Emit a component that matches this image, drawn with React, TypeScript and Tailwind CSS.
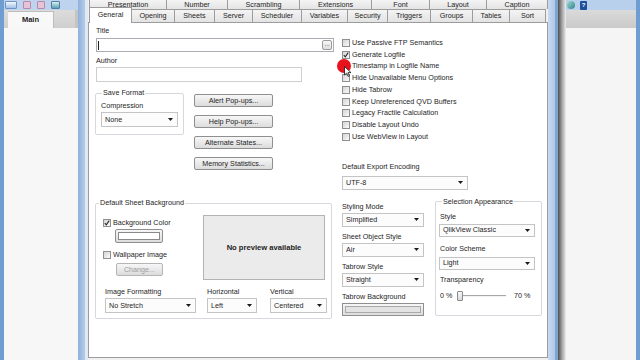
import React from 'react'

type Tab = { label: string; w: string }

const backTabs: Tab[] = [
  { label: 'Presentation', w: 'w-[78px]' },
  { label: 'Number', w: 'w-[61px]' },
  { label: 'Scrambling', w: 'w-[72px]' },
  { label: 'Extensions', w: 'w-[72px]' },
  { label: 'Font', w: 'w-[58px]' },
  { label: 'Layout', w: 'w-[57px]' },
  { label: 'Caption', w: 'w-[61px]' },
]

const frontTabs: Tab[] = [
  { label: 'Opening', w: 'w-[43px]' },
  { label: 'Sheets', w: 'w-[40px]' },
  { label: 'Server', w: 'w-[38px]' },
  { label: 'Scheduler', w: 'w-[49px]' },
  { label: 'Variables', w: 'w-[46px]' },
  { label: 'Security', w: 'w-[40px]' },
  { label: 'Triggers', w: 'w-[43px]' },
  { label: 'Groups', w: 'w-[42px]' },
  { label: 'Tables', w: 'w-[37px]' },
  { label: 'Sort', w: 'w-[36px]' },
]

const options = [
  { label: 'Use Passive FTP Semantics', checked: false },
  { label: 'Generate Logfile', checked: true },
  { label: 'Timestamp in Logfile Name', checked: false },
  { label: 'Hide Unavailable Menu Options', checked: false },
  { label: 'Hide Tabrow', checked: false },
  { label: 'Keep Unreferenced QVD Buffers', checked: false },
  { label: 'Legacy Fractile Calculation', checked: false },
  { label: 'Disable Layout Undo', checked: false },
  { label: 'Use WebView in Layout', checked: false },
]

const Arrow = () => (
  <svg width="5" height="3" viewBox="0 0 5 3" className="shrink-0">
    <path d="M0 0H5L2.5 3Z" fill="#1a1a1a" />
  </svg>
)

const Select = ({ value, className }: { value: string; className: string }) => (
  <div
    className={`flex items-center justify-between pl-[3px] pr-[4px] border border-[#c4c4c4] bg-[#fcfcfc] ${className}`}
  >
    <span>{value}</span>
    <Arrow />
  </div>
)

const Box = ({ checked = false }: { checked?: boolean }) => (
  <span className="w-[8px] h-[8px] shrink-0 border border-[#8f8f8f] bg-gradient-to-br from-[#d4d4d4] to-[#fafafa] flex items-center justify-center">
    {checked && (
      <svg width="6" height="6" viewBox="0 0 6 6">
        <path d="M0.8 3.2L2.3 4.8L5.2 0.6" fill="none" stroke="#2b2b2b" strokeWidth="1.1" />
      </svg>
    )}
  </span>
)

const Btn = ({ children, className = '' }: { children?: React.ReactNode; className?: string }) => (
  <div
    className={`flex items-center justify-center border border-[#8f8f8f] rounded-[2px] bg-gradient-to-b from-[#f7f7f7] to-[#dcdcdc] ${className}`}
  >
    {children}
  </div>
)

const LeftApp = () => (
  <div className="w-[78px] h-full flex flex-col border-l-[4px] border-[#6f9dd2] shrink-0">
    <div className="h-[10px] bg-[#bdd3ee] flex items-center gap-[6px] pl-[1px]">
      <span className="w-[12px] h-[8px] rounded-[1px] bg-gradient-to-b from-[#f4f8fc] to-[#9fc0e6] border border-[#6f95c4]" />
      <span className="w-[8px] h-[8px] rounded-[1px] bg-[#e6c3d6] border border-[#b98aa8]" />
      <span className="w-[8px] h-[8px] rounded-[1px] bg-[#e6c3d6] border border-[#b98aa8]" />
      <span className="w-[9px] h-[8px] rounded-[1px] bg-gradient-to-b from-[#d9f0f0] to-[#5c9fb5] border border-[#4e7ea0]" />
    </div>
    <div className="h-[18px] bg-gradient-to-b from-[#dcdcdc] to-[#cfcfcf] flex items-end pl-[4px] border-r-[3px] border-[#c4c4c4]">
      <div className="w-[46px] h-[17px] bg-[#f8f8f8] border-r border-t border-[#bdbdbd] flex items-center justify-center font-bold text-[7.5px]">
        Main
      </div>
    </div>
    <div className="flex-1 bg-[#f7f7f7]" />
  </div>
)

const RightApp = () => (
  <div className="flex-1 h-full flex">
    <div className="w-[8px] h-full bg-gradient-to-r from-[#4e4e4e] via-[#a3a3a3] to-[#eeeeee]" />
    <div className="flex-1 h-full flex flex-col border-r-[4px] border-[#6f9dd2]">
      <div className="h-[10px] bg-[#b9d0ed] flex items-center gap-[5px] pl-[1px]">
        <span className="w-[8px] h-[8px] rounded-full bg-gradient-to-br from-[#9fe0c8] to-[#2f7f8f]" />
        <span className="w-[7px] h-[9px] rounded-[1px] bg-[#1f4f9a] flex items-center justify-center text-[6px] leading-[6px] text-white font-bold">
          ?
        </span>
      </div>
      <div className="h-[18px] bg-gradient-to-b from-[#dadada] to-[#cacaca]" />
      <div className="flex-1 bg-[#f5f5f5]" />
    </div>
  </div>
)

const Dialog = () => (
  <div className="w-[480px] h-full flex shrink-0">
    <div className="w-[10px] h-full flex">
      <div className="w-[7px] bg-gradient-to-r from-[#8fb1db] to-[#b4cbe7]" />
      <div className="flex-1 bg-[#dfe8f3]" />
    </div>
    <div className="flex-1 h-full flex flex-col bg-[#f0f0f0]">
      <div className="h-[9px] flex pl-[1px]">
        {backTabs.map((t, i) => (
          <div
            key={t.label}
            className={`${t.w} h-full border-r border-[#9c9c9c] bg-gradient-to-b from-[#f4f4f4] to-[#e4e4e4] flex items-center justify-center ${i === 0 ? 'border-l' : ''}`}
          >
            {t.label}
          </div>
        ))}
      </div>
      <div className="h-[13px] flex items-end pl-[1px] relative z-10">
        <div className="w-[43px] h-[16px] mb-[-1px] bg-white border border-b-0 border-[#9c9c9c] flex items-start justify-center pt-[2px]">
          General
        </div>
        {frontTabs.map(t => (
          <div
            key={t.label}
            className={`${t.w} h-full border-t border-r border-[#9c9c9c] bg-gradient-to-b from-[#f4f4f4] to-[#e3e3e3] flex items-center justify-center`}
          >
            {t.label}
          </div>
        ))}
      </div>
      <div className="flex-1 mb-[2px] bg-white border border-[#9c9c9c] flex">
        {/* left column */}
        <div className="w-[253px] shrink-0 flex flex-col pl-[6px]">
          <div className="ml-[1px] mt-[3px] h-[10px]">Title</div>
          <div className="ml-[1px] mt-[2px] h-[14px] w-[238px] border border-[#abadb3] flex items-center justify-between pl-[1px] pr-[1px]">
            <span className="w-px h-[9px] bg-[#222]" />
            <span className="w-[10px] h-[10px] border border-[#9a9a9a] rounded-[2px] bg-gradient-to-b from-[#f7f7f7] to-[#dddddd] flex items-center justify-center text-[6px] leading-[6px] pb-[2px]">
              ...
            </span>
          </div>
          <div className="ml-[1px] mt-[4px] h-[10px]">Author</div>
          <div className="ml-[1px] mt-[1px] h-[15px] w-[206px] border border-[#cfcfcf]" />

          <div className="flex mt-[6px]">
            <fieldset className="w-[89px] h-[47px] border border-[#d5d9de] rounded-[2px] pl-[5px]">
              <legend className="ml-[1px] px-[1px] h-[10px] leading-[10px]">Save Format</legend>
              <div className="mt-[3px] h-[10px]">Compression</div>
              <Select value="None" className="mt-[1px] h-[15px] w-[77px]" />
            </fieldset>
            <div className="ml-[10px] mt-[6px] flex flex-col gap-[8px]">
              <Btn className="w-[79px] h-[13px]">Alert Pop-ups...</Btn>
              <Btn className="w-[79px] h-[13px]">Help Pop-ups...</Btn>
              <Btn className="w-[79px] h-[13px]">Alternate States...</Btn>
              <Btn className="w-[79px] h-[13px]">Memory Statistics...</Btn>
            </div>
          </div>

          <fieldset className="mt-[28px] w-[237px] h-[121px] border border-[#d5d9de] rounded-[2px]">
            <legend className="ml-[3px] px-[1px] h-[10px] leading-[10px]">Default Sheet Background</legend>
            <div className="flex items-start mt-[7px] pl-[7px]">
              <div className="flex flex-col pt-[3px]">
                <div className="h-[10px] flex items-center gap-[2px]">
                  <Box checked />
                  <span>Background Color</span>
                </div>
                <Btn className="ml-[12px] mt-[1px] w-[48px] h-[14px] p-[2px]">
                  <span className="w-full h-full bg-white border border-[#8a8a8a]" />
                </Btn>
                <div className="mt-[7px] h-[10px] flex items-center gap-[2px]">
                  <Box />
                  <span>Wallpaper Image</span>
                </div>
                <Btn className="ml-[13px] mt-[3px] w-[47px] h-[13px] border-[#b5b5b5] text-[#9c9c9c]">Change...</Btn>
              </div>
              <div className="ml-auto mr-[6px] w-[122px] h-[65px] bg-[#ebebeb] border border-[#b3b3b3] flex items-center justify-center font-bold text-[7.6px]">
                No preview available
              </div>
            </div>
            <div className="flex mt-[7px] pl-[9px]">
              <div className="flex flex-col">
                <div className="h-[10px]">Image Formatting</div>
                <Select value="No Stretch" className="mt-[1px] h-[15px] w-[91px]" />
              </div>
              <div className="flex flex-col ml-[11px]">
                <div className="h-[10px]">Horizontal</div>
                <Select value="Left" className="mt-[1px] h-[15px] w-[50px]" />
              </div>
              <div className="flex flex-col ml-[13px]">
                <div className="h-[10px]">Vertical</div>
                <Select value="Centered" className="mt-[1px] h-[15px] w-[57px]" />
              </div>
            </div>
          </fieldset>
        </div>

        {/* right column */}
        <div className="flex-1 flex flex-col">
          <div className="mt-[14px] flex flex-col">
            {options.map(o => (
              <div key={o.label} className="h-[11.75px] flex items-center gap-[2px]">
                <Box checked={o.checked} />
                <span>{o.label}</span>
              </div>
            ))}
          </div>
          <div className="mt-[19px] h-[10px]">Default Export Encoding</div>
          <Select value="UTF-8" className="mt-[4px] h-[14px] w-[126px]" />

          <div className="flex mt-[7px]">
            <div className="w-[82px] pt-[5px] flex flex-col">
              <div className="h-[10px]">Styling Mode</div>
              <Select value="Simplified" className="mt-[1px] h-[14px] w-[82px]" />
              <div className="mt-[5px] h-[10px]">Sheet Object Style</div>
              <Select value="Air" className="mt-[1px] h-[14px] w-[82px]" />
              <div className="mt-[5px] h-[10px]">Tabrow Style</div>
              <Select value="Straight" className="mt-[1px] h-[14px] w-[82px]" />
              <div className="mt-[5px] h-[10px]">Tabrow Background</div>
              <Btn className="mt-[1px] w-[82px] h-[13px] p-[2px] rounded-none">
                <span className="w-full h-full bg-[#e3e3e3] border border-[#a9a9a9]" />
              </Btn>
            </div>
            <fieldset className="ml-[11px] w-[107px] h-[119px] border border-[#d5d9de] rounded-[2px] pl-[3px]">
              <legend className="ml-[3px] px-[1px] h-[10px] leading-[10px]">Selection Appearance</legend>
              <div className="ml-[1px] mt-[5px] h-[10px]">Style</div>
              <Select value="QlikView Classic" className="mt-[2px] h-[13px] w-[96px]" />
              <div className="ml-[1px] mt-[7px] h-[10px]">Color Scheme</div>
              <Select value="Light" className="mt-[3px] h-[13px] w-[96px]" />
              <div className="ml-[1px] mt-[5px] h-[10px]">Transparency</div>
              <div className="mt-[4px] h-[14px] flex items-center">
                <span className="ml-[1px] w-[17px]">0 %</span>
                <div className="relative w-[49px] h-[10px] flex items-center">
                  <span className="w-full h-[2px] border-t border-b border-t-[#a8a8a8] border-b-[#f2f2f2]" />
                  <span className="absolute left-0 top-0 w-[6px] h-[10px] rounded-[1px] border border-[#8a8a8a] bg-gradient-to-b from-[#f8f8f8] to-[#d8d8d8]" />
                </div>
                <span className="ml-[8px]">70 %</span>
              </div>
            </fieldset>
          </div>
        </div>
      </div>
    </div>
    <div className="w-[10px] h-full flex">
      <div className="w-[7px] bg-gradient-to-r from-[#c9dbf0] to-[#adc7e6]" />
      <div className="flex-1 bg-[#7ea4d2]" />
    </div>
  </div>
)

export default function App() {
  return (
    <div className="relative w-[640px] h-[360px] overflow-hidden flex bg-[#f5f5f5] text-[#1e1e1e] [font-family:'Liberation_Sans',Arial,sans-serif] text-[7.2px] leading-[10px]">
      <LeftApp />
      <Dialog />
      <RightApp />
      {/* click indicator + cursor */}
      <span className="absolute left-[337px] top-[59px] w-[14px] h-[14px] rounded-full bg-[#e8121c]" />
      <svg className="absolute left-[344px] top-[66px]" width="8" height="11" viewBox="0 0 8 11">
        <path d="M0.5 0.5V9L2.6 7.1L4.1 10.4L5.4 9.8L4 6.6H7Z" fill="#fff" stroke="#111" strokeWidth="0.8" />
      </svg>
    </div>
  )
}
